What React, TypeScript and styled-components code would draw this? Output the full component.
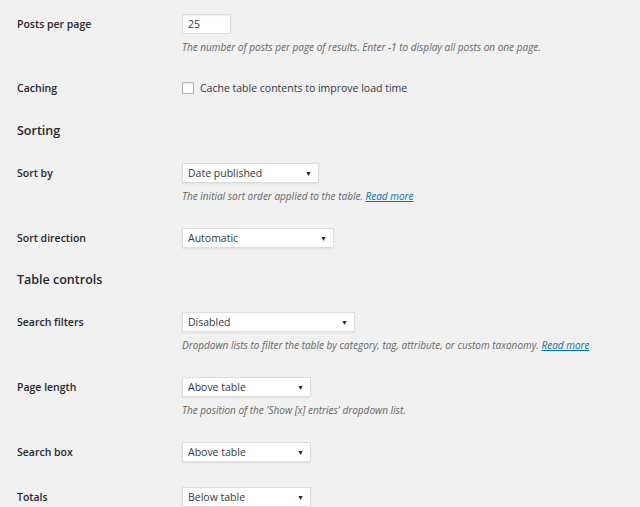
import React from 'react';
import styled, { createGlobalStyle } from 'styled-components';

const GlobalStyle = createGlobalStyle`
  html, body {
    margin: 0;
    padding: 0;
    background: #f1f1f1;
  }
  body {
    font-family: "Open Sans", "Noto Sans", sans-serif;
    color: #23282d;
  }
`;

const Page = styled.div`
  padding: 14px 0 0 17px;
  width: 640px;
  box-sizing: border-box;
  height: 507px;
  overflow: hidden;
`;

const Row = styled.div<{ $gap: number }>`
  display: flex;
  margin-top: ${({ $gap }) => $gap}px;
`;

const Label = styled.div`
  width: 165px;
  flex-shrink: 0;
  height: 20px;
  display: flex;
  align-items: center;
  font-size: 10.5px;
  font-weight: 600;
  color: #23282d;
`;

const Control = styled.div`
  display: flex;
  flex-direction: column;
  align-items: flex-start;
`;

const Heading = styled.h2<{ $gap: number }>`
  margin: ${({ $gap }) => $gap}px 0 0;
  font-size: 12.5px;
  font-weight: 600;
  line-height: 18px;
  color: #23282d;
`;

const TextInput = styled.div`
  width: 49px;
  height: 20px;
  box-sizing: border-box;
  background: #fff;
  border: 1px solid #ddd;
  box-shadow: inset 0 1px 2px rgba(0, 0, 0, 0.07);
  font-size: 10.5px;
  padding: 0 5px;
  display: flex;
  align-items: center;
  color: #32373c;
`;

const Select = styled.div<{ $width: number }>`
  width: ${({ $width }) => $width}px;
  height: 20px;
  box-sizing: border-box;
  background: #fff;
  border: 1px solid #ddd;
  box-shadow: 0 1px 2px rgba(0, 0, 0, 0.07);
  font-size: 10.5px;
  padding: 0 6px 0 5px;
  display: flex;
  align-items: center;
  justify-content: space-between;
  color: #32373c;
`;

const Arrow = styled.span`
  font-size: 7px;
  color: #23282d;
`;

const Description = styled.p`
  margin: 6px 0 0;
  font-size: 10px;
  line-height: 14px;
  font-style: italic;
  color: #666;
  white-space: nowrap;
`;

const Link = styled.a`
  color: #0073aa;
  text-decoration: underline;
`;

const CheckRow = styled.label`
  display: flex;
  align-items: center;
  gap: 6px;
  height: 16px;
  font-size: 10.5px;
  color: #32373c;
`;

const Checkbox = styled.span`
  width: 12px;
  height: 12px;
  box-sizing: border-box;
  background: #fff;
  border: 1px solid #b4b9be;
  box-shadow: inset 0 1px 2px rgba(0, 0, 0, 0.1);
`;

const SelectField: React.FC<{ width: number; value: string }> = ({ width, value }) => (
  <Select $width={width}>
    <span>{value}</span>
    <Arrow>▼</Arrow>
  </Select>
);

export default function App() {
  return (
    <Page>
      <GlobalStyle />
      <Row $gap={0}>
        <Label>Posts per page</Label>
        <Control>
          <TextInput>25</TextInput>
          <Description>The number of posts per page of results. Enter -1 to display all posts on one page.</Description>
        </Control>
      </Row>

      <Row $gap={24}>
        <Label>Caching</Label>
        <Control>
          <CheckRow style={{ marginTop: 2 }}>
            <Checkbox />
            Cache table contents to improve load time
          </CheckRow>
        </Control>
      </Row>

      <Heading $gap={24}>Sorting</Heading>

      <Row $gap={23}>
        <Label>Sort by</Label>
        <Control>
          <SelectField width={137} value="Date published" />
          <Description>
            The initial sort order applied to the table. <Link href="#">Read more</Link>
          </Description>
        </Control>
      </Row>

      <Row $gap={25}>
        <Label>Sort direction</Label>
        <Control>
          <SelectField width={152} value="Automatic" />
        </Control>
      </Row>

      <Heading $gap={23}>Table controls</Heading>

      <Row $gap={23}>
        <Label>Search filters</Label>
        <Control>
          <SelectField width={173} value="Disabled" />
          <Description>
            Dropdown lists to filter the table by category, tag, attribute, or custom taxonomy. <Link href="#">Read more</Link>
          </Description>
        </Control>
      </Row>

      <Row $gap={25}>
        <Label>Page length</Label>
        <Control>
          <SelectField width={129} value="Above table" />
          <Description>The position of the 'Show [x] entries' dropdown list.</Description>
        </Control>
      </Row>

      <Row $gap={25}>
        <Label>Search box</Label>
        <Control>
          <SelectField width={129} value="Above table" />
        </Control>
      </Row>

      <Row $gap={25}>
        <Label>Totals</Label>
        <Control>
          <SelectField width={129} value="Below table" />
        </Control>
      </Row>
    </Page>
  );
}
